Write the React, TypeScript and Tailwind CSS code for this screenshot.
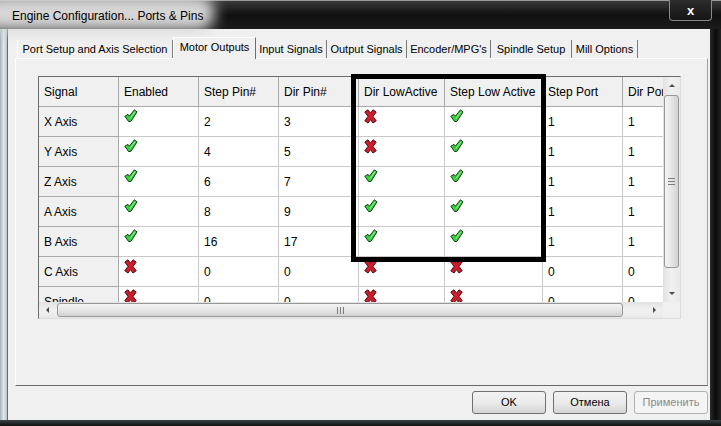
import React from 'react';

type Row = {
  name: string;
  enabled: boolean;
  stepPin: string;
  dirPin: string;
  dirLow: boolean;
  stepLow: boolean;
  stepPort: string;
  dirPort: string;
};

const rows: Row[] = [
  { name: 'X Axis', enabled: true, stepPin: '2', dirPin: '3', dirLow: false, stepLow: true, stepPort: '1', dirPort: '1' },
  { name: 'Y Axis', enabled: true, stepPin: '4', dirPin: '5', dirLow: false, stepLow: true, stepPort: '1', dirPort: '1' },
  { name: 'Z Axis', enabled: true, stepPin: '6', dirPin: '7', dirLow: true, stepLow: true, stepPort: '1', dirPort: '1' },
  { name: 'A Axis', enabled: true, stepPin: '8', dirPin: '9', dirLow: true, stepLow: true, stepPort: '1', dirPort: '1' },
  { name: 'B Axis', enabled: true, stepPin: '16', dirPin: '17', dirLow: true, stepLow: true, stepPort: '1', dirPort: '1' },
  { name: 'C Axis', enabled: false, stepPin: '0', dirPin: '0', dirLow: false, stepLow: false, stepPort: '0', dirPort: '0' },
  { name: 'Spindle', enabled: false, stepPin: '0', dirPin: '0', dirLow: false, stepLow: false, stepPort: '0', dirPort: '0' },
];

const headers = ['Signal', 'Enabled', 'Step Pin#', 'Dir Pin#', 'Dir LowActive', 'Step Low Active', 'Step Port', 'Dir Port'];

const tabs = [
  { label: 'Port Setup and Axis Selection', w: 'w-[156px]' },
  { label: 'Motor Outputs', w: 'w-[83px]', active: true },
  { label: 'Input Signals', w: 'w-[71px]' },
  { label: 'Output Signals', w: 'w-[80px]' },
  { label: "Encoder/MPG's", w: 'w-[84px]' },
  { label: 'Spindle Setup', w: 'w-[81px]' },
  { label: 'Mill Options', w: 'w-[66px]' },
];

function Check() {
  return (
    <svg width="14" height="14" viewBox="0 0 14 14" className="block">
      <path
        d="M0.8 7.2 L4 5.4 L5.4 7.2 L10.4 0.8 L13 2.9 L6.9 12.4 L4.6 12.6 Z"
        fill="#34d23c"
        stroke="#173d17"
        strokeWidth="1"
        strokeLinejoin="round"
      />
      <path d="M6 9.6 L11 2.6" stroke="#a8f5a8" strokeWidth="0.9" />
    </svg>
  );
}

function Cross() {
  return (
    <svg width="13" height="15" viewBox="0 0 13 15" className="block">
      <path
        d="M0.8 3 L4 0.8 L6.5 4.2 L9 0.8 L12.2 3 L9 7.4 L12.2 11.8 L9 14 L6.5 10.6 L4 14 L0.8 11.8 L4 7.4 Z"
        fill="#cf1e2b"
        stroke="#520a10"
        strokeWidth="1"
        strokeLinejoin="round"
      />
    </svg>
  );
}

function Flag({ on }: { on: boolean }) {
  return <div className="pl-[5px] pt-[2px]">{on ? <Check /> : <Cross />}</div>;
}

function ScrollGrip({ vertical }: { vertical?: boolean }) {
  return vertical ? (
    <div className="flex flex-col gap-[2px]">
      <div className="w-[7px] h-px bg-[#7d7d7d]" />
      <div className="w-[7px] h-px bg-[#7d7d7d]" />
      <div className="w-[7px] h-px bg-[#7d7d7d]" />
    </div>
  ) : (
    <div className="flex gap-[2px]">
      <div className="h-[7px] w-px bg-[#7d7d7d]" />
      <div className="h-[7px] w-px bg-[#7d7d7d]" />
      <div className="h-[7px] w-px bg-[#7d7d7d]" />
    </div>
  );
}

function Grid() {
  const cell = 'h-[30px] border-r border-b border-[#c9c9c9] bg-white flex items-center pl-[5px] text-[12px] whitespace-nowrap overflow-hidden';
  const flagCell = 'h-[30px] border-r border-b border-[#c9c9c9] bg-white';
  const headCell = 'h-[30px] border-r border-b border-[#a9a9a9] bg-[#f0f0f0] flex items-center pl-[5px] text-[12px] whitespace-nowrap overflow-hidden';
  return (
    <div className="relative w-[643px]">
      <div className="w-[643px] border border-l-[#6b6b6b] border-t-[#6b6b6b] border-r-[#dcdcdc] border-b-[#dcdcdc] bg-[#f0f0f0]">
        <div className="flex">
          <div className="w-[624px] h-[225px] overflow-hidden bg-white">
            <div className="grid grid-cols-[80px_80px_80px_80px_86px_98px_80px_80px] w-[664px]">
              {headers.map((h) => (
                <div key={h} className={headCell}>
                  {h}
                </div>
              ))}
              {rows.map((r) => (
                <React.Fragment key={r.name}>
                  <div className={headCell}>{r.name}</div>
                  <div className={flagCell}>
                    <Flag on={r.enabled} />
                  </div>
                  <div className={cell}>{r.stepPin}</div>
                  <div className={cell}>{r.dirPin}</div>
                  <div className={flagCell}>
                    <Flag on={r.dirLow} />
                  </div>
                  <div className={flagCell}>
                    <Flag on={r.stepLow} />
                  </div>
                  <div className={cell}>{r.stepPort}</div>
                  <div className={cell}>{r.dirPort}</div>
                </React.Fragment>
              ))}
            </div>
          </div>
          {/* vertical scrollbar */}
          <div className="w-[17px] h-[225px] flex flex-col bg-gradient-to-r from-[#e2e2e2] via-[#f1f1f1] to-[#e9e9e9]">
            <div className="h-[17px] flex items-center justify-center">
              <div className="w-0 h-0 border-l-[3px] border-r-[3px] border-b-[3px] border-l-transparent border-r-transparent border-b-[#4a4a4a]" />
            </div>
            <div className="mt-px mx-[1px] h-[173px] rounded-[3px] border border-[#979797] bg-gradient-to-r from-[#f4f4f4] via-[#e6e6e6] to-[#d3d3d3] flex items-center justify-center">
              <ScrollGrip vertical />
            </div>
            <div className="flex-1" />
            <div className="h-[17px] flex items-center justify-center">
              <div className="w-0 h-0 border-l-[3px] border-r-[3px] border-t-[3px] border-l-transparent border-r-transparent border-t-[#4a4a4a]" />
            </div>
          </div>
        </div>
        <div className="flex">
          {/* horizontal scrollbar */}
          <div className="w-[624px] h-[16px] flex bg-gradient-to-b from-[#e2e2e2] via-[#f1f1f1] to-[#e9e9e9]">
            <div className="w-[17px] flex items-center justify-center">
              <div className="w-0 h-0 border-t-[3px] border-b-[3px] border-r-[3px] border-t-transparent border-b-transparent border-r-[#4a4a4a]" />
            </div>
            <div className="ml-px my-[1px] w-[566px] rounded-[3px] border border-[#979797] bg-gradient-to-b from-[#f4f4f4] via-[#e6e6e6] to-[#d3d3d3] flex items-center justify-center">
              <ScrollGrip />
            </div>
            <div className="flex-1" />
            <div className="w-[17px] flex items-center justify-center">
              <div className="w-0 h-0 border-t-[3px] border-b-[3px] border-l-[3px] border-t-transparent border-b-transparent border-l-[#4a4a4a]" />
            </div>
          </div>
          <div className="w-[17px] h-[16px] bg-[#f0f0f0]" />
        </div>
      </div>
      {/* highlight box drawn over the grid */}
      <div className="absolute left-[313px] top-[-2px] w-[195px] h-[188px] border-[5px] border-black pointer-events-none" />
    </div>
  );
}

export default function App() {
  return (
    <div className="w-[721px] h-[426px] relative overflow-hidden bg-[#121212] font-['Liberation_Sans',Arial,sans-serif] text-black">
      {/* title bar */}
      <div className="relative h-[29px] bg-gradient-to-b from-[#3a3a3a] via-[#101010] to-[#1b1b1b] border-t border-[#9a9a9a]">
        <div className="absolute left-[-20px] top-[-6px] w-[235px] h-[36px] rounded-full bg-[#d6d6d6] blur-[7px]" />
        <div className="relative pl-[12px] pt-[8px] text-[12px] leading-[14px]">Engine Configuration... Ports &amp; Pins</div>
        <div className="absolute right-[9px] top-[-1px] w-[43px] h-[21px] rounded-b-[4px] border border-t-0 border-[#8a8a8a] bg-gradient-to-b from-[#2c2c2c] to-[#151515] flex items-center justify-center">
          <span className="text-white font-bold text-[13px] leading-none">x</span>
        </div>
      </div>

      <div className="flex h-[391px]">
        <div className="w-[7px] bg-gradient-to-r from-[#9fb2b8] via-[#dfe8ea] to-[#b9c8cc]" />
        <div className="w-[703px] bg-[#f0f0f0] border-l border-[#5e6a70] flex flex-col">
          {/* tabs */}
          <div className="mt-[8px] ml-[9px] h-[21px] flex items-end text-[11px]">
            {tabs.map((t) =>
              t.active ? (
                <div
                  key={t.label}
                  className={`${t.w} h-[22px] -mb-px relative z-10 bg-[#f0f0f0] border-l border-t border-white border-r border-r-[#6e6e6e] flex items-center justify-center pb-[2px]`}
                >
                  {t.label}
                </div>
              ) : (
                <div key={t.label} className={`${t.w} h-[18px] flex items-center justify-center border-r border-[#7a7a7a] first:border-l first:border-l-white`}>
                  {t.label}
                </div>
              )
            )}
          </div>
          {/* tab page */}
          <div className="ml-[7px] w-[693px] h-[328px] border border-l-white border-t-white border-r-[#a0a0a0] border-b-[#696969] pl-[22px] pt-[17px]">
            <Grid />
          </div>
          {/* dialog buttons */}
          <div className="mt-[5px] pr-[2px] flex justify-end gap-[7px] text-[11px]">
            <button className="w-[74px] h-[23px] rounded-[3px] border border-[#707070] bg-gradient-to-b from-[#f2f2f2] via-[#ebebeb] to-[#d5d5d5]">OK</button>
            <button className="w-[74px] h-[23px] rounded-[3px] border border-[#707070] bg-gradient-to-b from-[#f2f2f2] via-[#ebebeb] to-[#d5d5d5]">Отмена</button>
            <button className="w-[74px] h-[23px] rounded-[3px] border border-[#adb2b5] bg-[#f4f4f4] text-[#8b8b8b]">Применить</button>
          </div>
        </div>
        <div className="w-[11px] bg-gradient-to-r from-[#2a2a2a] via-[#0c0c0c] to-[#222222]" />
      </div>
      <div className="h-[6px] bg-gradient-to-b from-[#3a4248] to-[#101010]" />
    </div>
  );
}
